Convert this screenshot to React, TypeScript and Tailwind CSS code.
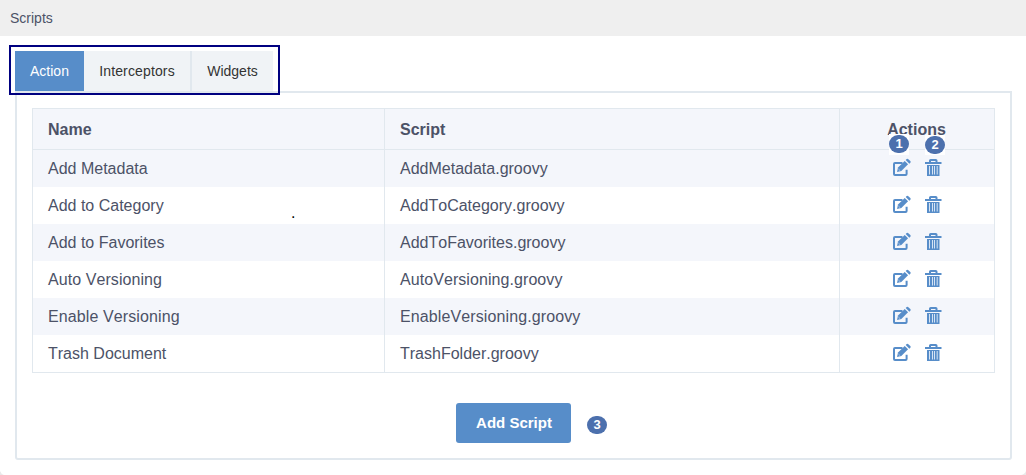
const scripts = [
  ["Add Metadata", "AddMetadata.groovy"],
  ["Add to Category", "AddToCategory.groovy"],
  ["Add to Favorites", "AddToFavorites.groovy"],
  ["Auto Versioning", "AutoVersioning.groovy"],
  ["Enable Versioning", "EnableVersioning.groovy"],
  ["Trash Document", "TrashFolder.groovy"],
];

function EditIcon() {
  return (
    <svg width="18" height="19" viewBox="0 0 18 19" fill="none">
      <path d="M9.5 5H2Q1 5 1 6v10q0 1 1 1h10.6q1 0 1-1v-4.2" stroke="#578dc9" strokeWidth="2" />
      <path d="M4 13.9l1-4.3L11.7 2.9l3.4 3.4L8.3 13z" fill="#578dc9" />
      <path d="M12.7 2l1-.9q.9-.6 1.7.1l1.9 1.9q.7.8.1 1.6l-1 1z" fill="#578dc9" />
      <path d="M5.4 11l1.9 1.9" stroke="#b5cdea" strokeWidth=".9" />
    </svg>
  );
}

function TrashIcon() {
  return (
    <svg width="17" height="19" viewBox="0 0 17 19" fill="none">
      <path d="M5 4V2.5Q5 2 5.7 2h5.1q.7 0 .7.5V4" stroke="#578dc9" strokeWidth="2" />
      <path d="M0 4h16.5v2H0zM2 7h12.5v11H2z" fill="#578dc9" />
      <path d="M4.5 8v8.5M7.5 8v8.5M9.5 8v8.5M12.2 8v8.5" stroke="#d6e4f4" strokeWidth="1" />
    </svg>
  );
}

function Badge({ n }: { n: number }) {
  return (
    <span className="flex h-[18px] w-5 items-center justify-center rounded-[9px] bg-[#4c70ad] text-[13px] leading-[18px] font-bold text-white">
      {n}
    </span>
  );
}

export default function App() {
  return (
    <div className="relative h-[475px] w-[1026px] overflow-hidden bg-white font-['Liberation_Sans',Arial,sans-serif] text-[#4c5267] [font-kerning:none]">
      <header className="h-9 bg-[#efefef] px-2.5 text-sm leading-9">Scripts</header>
      <main className="pt-[15px] pr-[14px] pl-[15px]">
        <nav className="relative flex h-10 text-sm leading-10 text-[#333]">
          <button className="w-[69px] bg-[#578dc9] text-white">Action</button>
          <button className="w-[108px] border-r-2 border-[#e1e8ee] bg-[#f0f3f6] tracking-[0.14px]">Interceptors</button>
          <button className="w-[81px] bg-[#f0f3f6]">Widgets</button>
          <div className="absolute -top-1.5 -left-1.5 z-10 h-[50px] w-[271px] border-2 border-[#000080]" />
        </nav>
        <section className="h-[369px] rounded-b-[3px] border-2 border-[#e1e8ee] p-[15px]">
          <table className="w-[963px] table-fixed border-separate border-spacing-0 text-base leading-6">
            <colgroup>
              <col className="w-[352px]" />
              <col className="w-[455px]" />
              <col className="w-[156px]" />
            </colgroup>
            <thead>
              <tr className="h-[42px] bg-[#f4f6fb]">
                <th className="border-y border-l border-[#e1e8ee] p-0 pt-0.5 pl-[15px] text-left">Name</th>
                <th className="border-y border-l border-[#e1e8ee] p-0 pt-0.5 pl-[15px] text-left">Script</th>
                <th className="relative border border-[#e1e8ee] p-0 pt-0.5 pr-px text-center">
                  Actions
                  <div className="absolute top-[25px] left-[49px] z-10 h-[21px] w-5 bg-white pt-px"><Badge n={1} /></div>
                  <div className="absolute top-[26px] left-[85px] z-10 h-[20px] w-5 bg-white pt-px"><Badge n={2} /></div>
                </th>
              </tr>
            </thead>
            <tbody>
              {scripts.map(([name, file]) => (
                <tr key={name} className="group h-[37px] odd:bg-[#f4f6fb] last:h-[38px] nth-4:tracking-[0.07px] nth-5:tracking-[0.11px]">
                  <td className="border-l border-[#e1e8ee] p-0 pt-[7px] pl-[15px] align-top group-last:border-b">{name}</td>
                  <td className="border-l border-[#e1e8ee] p-0 pt-[7px] pl-[15px] align-top group-last:border-b">{file}</td>
                  <td className="border-x border-[#e1e8ee] p-0 pt-2 align-top group-last:border-b">
                    <div className="flex h-[19px] gap-[14px] pl-[53px]"><EditIcon /><TrashIcon /></div>
                  </td>
                </tr>
              ))}
            </tbody>
          </table>
          <div className="mt-[30px] flex items-center pl-[424px]">
            <button className="h-10 w-[115px] rounded-[3px] bg-[#578dc9] pl-px text-[15px] font-bold text-white">Add Script</button>
            <div className="mt-1 ml-4"><Badge n={3} /></div>
          </div>
        </section>
      </main>
      <span className="absolute top-[204px] left-[291px] text-base leading-[18px] text-black">.</span>
      <svg className="absolute right-0 bottom-0" width="5" height="4"><path d="M5 0v4H0Q4 3 5 0Z" fill="#e9e9e9" /></svg>
      <svg className="absolute bottom-0 left-0" width="4" height="4"><path d="M0 0v4h4Q1 3 0 0Z" fill="#e9e9e9" /></svg>
    </div>
  );
}
